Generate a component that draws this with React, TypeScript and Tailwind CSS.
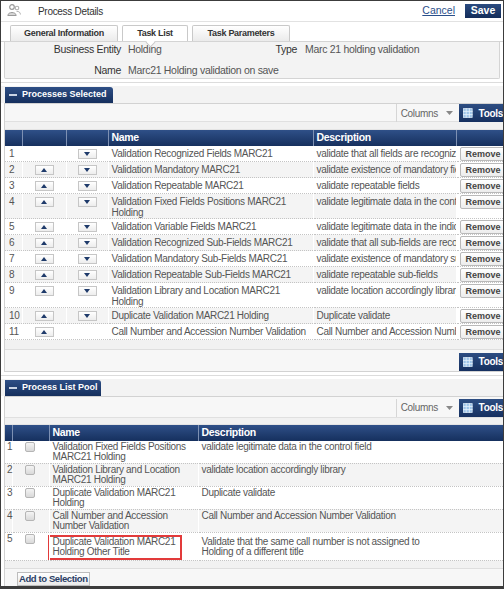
import React from "react";

const selected = [
  { name: "Validation Recognized Fields MARC21", desc: "validate that all fields are recognized" },
  { name: "Validation Mandatory MARC21", desc: "validate existence of mandatory fields" },
  { name: "Validation Repeatable MARC21", desc: "validate repeatable fields" },
  { name: "Validation Fixed Fields Positions MARC21 Holding", desc: "validate legitimate data in the control field" },
  { name: "Validation Variable Fields MARC21", desc: "validate legitimate data in the indicators" },
  { name: "Validation Recognized Sub-Fields MARC21", desc: "validate that all sub-fields are recognized" },
  { name: "Validation Mandatory Sub-Fields MARC21", desc: "validate existence of mandatory sub-fields" },
  { name: "Validation Repeatable Sub-Fields MARC21", desc: "validate repeatable sub-fields" },
  { name: "Validation Library and Location MARC21 Holding", desc: "validate location accordingly library" },
  { name: "Duplicate Validation MARC21 Holding", desc: "Duplicate validate" },
  { name: "Call Number and Accession Number Validation", desc: "Call Number and Accession Number Validation" },
];

const pool = [
  { name: "Validation Fixed Fields Positions MARC21 Holding", desc: "validate legitimate data in the control field" },
  { name: "Validation Library and Location MARC21 Holding", desc: "validate location accordingly library" },
  { name: "Duplicate Validation MARC21 Holding", desc: "Duplicate validate" },
  { name: "Call Number and Accession Number Validation", desc: "Call Number and Accession Number Validation" },
  {
    name: "Duplicate Validation MARC21 Holding Other Title",
    desc: "Validate that the same call number is not assigned to Holding of a different title",
  },
];

function ArrowBtn({ dir }: { dir: "up" | "down" }) {
  return (
    <div className="mx-auto flex h-[10px] w-[19px] items-center justify-center border border-[#c6c6c6] bg-linear-to-b from-white to-[#ededed]">
      <svg width="6" height="4" viewBox="0 0 6 4">
        {dir === "up" ? (
          <path d="M0 4 L3 0 L6 4 Z" fill="#1e3a6a" />
        ) : (
          <path d="M0 0 L6 0 L3 4 Z" fill="#1e3a6a" />
        )}
      </svg>
    </div>
  );
}

function ToolsButton() {
  return (
    <div className="flex h-[18px] w-[44px] shrink-0 items-center gap-[6px] bg-linear-to-b from-[#2d4d82] to-[#163060] pl-[4px] text-[10px] font-bold text-white">
      <svg width="12" height="12" viewBox="0 0 12 12">
        <rect x="0.5" y="0.5" width="11" height="11" fill="#9cc3e8" stroke="#d8e8f7" />
        <path d="M0 4 H12 M0 8 H12 M4 0 V12 M8 0 V12" stroke="#e8f2fb" strokeWidth="1" />
      </svg>
      Tools
    </div>
  );
}

function ColumnsMenu() {
  return (
    <div className="flex h-[18px] items-center gap-[8px] border-l border-[#d6d6d6] pl-[4px] pr-[6px] text-[10px] text-[#666]">
      Columns
      <svg width="7" height="4" viewBox="0 0 7 4">
        <path d="M0 0 H7 L3.5 4 Z" fill="#888" />
      </svg>
    </div>
  );
}

function SectionTab({ label, width }: { label: string; width: string }) {
  return (
    <div className="flex h-[17px] items-end bg-[#f3f3f3]">
      <div
        className={`ml-[4px] flex h-[16px] ${width} items-center gap-[5px] whitespace-nowrap rounded-tr-[3px] bg-linear-to-b from-[#2e4f86] to-[#152f5d] pl-[4px] text-[9px] font-bold tracking-[0px] text-white`}
      >
        <span className="h-[2px] w-[8px] bg-[#c9d3e3]" />
        {label}
      </div>
    </div>
  );
}

function Checkbox() {
  return (
    <span className="block h-[10px] w-[10px] rounded-[2px] border border-[#b5b5b5] bg-linear-to-b from-[#f4f4f4] to-[#d9d9d9]" />
  );
}

const tabCls =
  "flex h-[16px] items-center justify-center whitespace-nowrap rounded-t-[2px] border border-b-0 border-[#c9c9c9] text-[9px] font-bold tracking-[-0.3px] text-[#333]";

export default function App() {
  return (
    <div
      className="h-[589px] w-[504px] overflow-hidden border border-b-[3px] border-[#3c3c3c] bg-white text-[10px] tracking-[-0.3px] text-[#555]"
      style={{ fontFamily: '"Liberation Sans", Arial, sans-serif' }}
    >
      {/* page header */}
      <div className="flex h-[21px] items-center border-b border-[#e2e2e2] pl-[6px] pr-[2px]">
        <svg width="14" height="13" viewBox="0 0 14 13" className="mt-[-2px]">
          <circle cx="5" cy="3" r="2.3" fill="none" stroke="#9a9a9a" strokeWidth="1.2" />
          <circle cx="10" cy="4" r="1.8" fill="none" stroke="#b0b0b0" strokeWidth="1.1" />
          <path d="M0.8 11.5 C1 7.5 9 7.5 9.2 11.5 Z" fill="#d6d6d6" stroke="#9a9a9a" strokeWidth="1" />
          <path d="M9.5 7.3 C12 7.2 13.4 8.5 13.4 10.5" fill="none" stroke="#b0b0b0" strokeWidth="1" />
        </svg>
        <span className="ml-[17px] text-[10px] text-[#333]">Process Details</span>
        <span className="ml-auto text-[10.5px] tracking-normal text-[#2a4f8a] underline">Cancel</span>
        <span className="ml-[10px] flex h-[14px] w-[36px] items-center justify-center bg-linear-to-b from-[#2b4b80] to-[#142d5a] text-[10.5px] font-bold tracking-normal text-white">
          Save
        </span>
      </div>

      {/* tabs */}
      <div className="mt-[3px] flex h-[17px] items-end gap-[4px] border-b border-[#d4d4d4] pl-[9px]">
        <div className={`${tabCls} w-[108px] bg-linear-to-b from-white to-[#ebebeb]`}>General Information</div>
        <div className={`${tabCls} relative w-[66px] bg-white`}>
          Task List
          <span className="absolute bottom-[-5px] left-[24px] h-[7px] w-[7px] rotate-45 border-b border-r border-[#c9c9c9] bg-white" />
        </div>
        <div className={`${tabCls} w-[98px] bg-linear-to-b from-white to-[#ebebeb]`}>Task Parameters</div>
      </div>

      {/* info panel */}
      <div className="mx-[3px] flex h-[37px] flex-col justify-center gap-[5px] rounded-b-[2px] border border-t-0 border-[#d4d4d4] bg-[#f3f3f3] pt-[1px] text-[10.5px]">
        <div className="flex items-center">
          <span className="w-[116px] text-right text-[#333]">Business Entity</span>
          <span className="ml-[7px] w-[130px]">Holding</span>
          <span className="w-[39px] text-right text-[#333]">Type</span>
          <span className="ml-[8px]">Marc 21 holding validation</span>
        </div>
        <div className="flex items-center">
          <span className="w-[116px] text-right text-[#333]">Name</span>
          <span className="ml-[7px]">Marc21 Holding validation on save</span>
        </div>
      </div>

      {/* processes selected */}
      <div className="mt-[3px] border-t border-[#dcdcdc] pt-[3px]">
        <SectionTab label="Processes Selected" width="w-[108px]" />
        <div className="ml-[3px] border-l border-t border-[#d2d2d2] bg-[#f7f7f7]">
          <div className="flex h-[18px] items-center justify-end border-b border-[#e0e0e0] pt-px">
            <ColumnsMenu />
            <ToolsButton />
          </div>
          <div className="h-[8px] border-b border-[#e4e4e4] bg-[#f1f1f1]" />
          <table className="w-[500px] table-fixed border-collapse">
            <colgroup>
              <col className="w-[17px]" />
              <col className="w-[44px]" />
              <col className="w-[42px]" />
              <col className="w-[205px]" />
              <col className="w-[143px]" />
              <col className="w-[49px]" />
            </colgroup>
            <thead>
              <tr className="h-[16px] bg-linear-to-b from-[#2f5088] to-[#16305e] text-left text-[10.5px] font-bold text-white">
                <th className="border-r border-[#7d90b3]" />
                <th className="border-r border-[#7d90b3]" />
                <th className="border-r border-[#7d90b3]" />
                <th className="border-r border-[#7d90b3] pl-[3px]">Name</th>
                <th className="border-r border-[#7d90b3] pl-[3px]">Description</th>
                <th />
              </tr>
            </thead>
            <tbody>
              {selected.map((r, i) => (
                <tr
                  key={i}
                  className={`border-b border-dotted border-[#c4c4c4] align-top leading-[11px] ${
                    i % 2 === 1 ? "bg-[#f4f4f4]" : "bg-white"
                  }`}
                >
                  <td className="border-r border-white pl-[4px] pt-[2px]">{i + 1}</td>
                  <td className="border-r border-white pt-[3px]">{i > 0 && <ArrowBtn dir="up" />}</td>
                  <td className="border-r border-white pt-[3px]">
                    {i < selected.length - 1 && <ArrowBtn dir="down" />}
                  </td>
                  <td className="border-r border-white px-[3px] pt-[2px]">{r.name}</td>
                  <td className="overflow-hidden whitespace-nowrap border-r border-white pl-[3px] pt-[2px]">
                    {r.desc}
                  </td>
                  <td className="bg-white pl-[3px] pt-px">
                    <div className="flex h-[14px] w-[47px] items-center justify-center rounded-[2px] border border-[#b9b9b9] bg-linear-to-b from-white to-[#ececec] text-[9px] font-bold tracking-[0px] text-[#444]">
                      Remove
                    </div>
                  </td>
                </tr>
              ))}
            </tbody>
          </table>
          <div className="h-[10px] border-b border-[#dedede] bg-[#f1f1f1]" />
          <div className="flex h-[22px] items-center justify-end border-b border-[#d2d2d2] bg-[#f7f7f7] pt-[2px]">
            <ToolsButton />
          </div>
        </div>
      </div>

      {/* process list pool */}
      <div className="mt-[3px] border-t border-[#dcdcdc] pt-[3px]">
        <SectionTab label="Process List Pool" width="w-[96px]" />
        <div className="ml-[3px] border-l border-t border-[#d2d2d2] bg-[#f7f7f7]">
          <div className="flex h-[21px] items-center justify-end border-b border-[#e0e0e0] pt-px">
            <ColumnsMenu />
            <ToolsButton />
          </div>
          <div className="h-[7px] border-b border-[#e4e4e4] bg-[#f1f1f1]" />
          <table className="w-[500px] table-fixed border-collapse">
            <colgroup>
              <col className="w-[7px]" />
              <col className="w-[37px]" />
              <col className="w-[149px]" />
              <col className="w-[307px]" />
            </colgroup>
            <thead>
              <tr className="h-[15px] bg-linear-to-b from-[#2f5088] to-[#16305e] text-left text-[10.5px] font-bold text-white">
                <th className="border-r border-[#7d90b3]" />
                <th className="border-r border-[#7d90b3]" />
                <th className="border-r border-[#7d90b3] pl-[3px]">Name</th>
                <th className="pl-[3px]">Description</th>
              </tr>
            </thead>
            <tbody>
              {pool.map((r, i) => {
                const last = i === pool.length - 1;
                return (
                  <tr
                    key={i}
                    className={`border-b border-dotted border-[#c4c4c4] align-top leading-[10.5px] ${
                      i % 2 === 1 ? "bg-[#f4f4f4]" : "bg-white"
                    }`}
                  >
                    <td className="border-r border-white pl-[2px] pt-[1px]">{i + 1}</td>
                    <td className="border-r border-white pl-[12px] pt-[1px]">
                      <Checkbox />
                    </td>
                    <td className="border-r border-white pl-[3px] pr-[6px] pt-[1px]">
                      {last ? (
                        <div className="ml-[-5px] mt-[1px] w-[134px] border-2 border-[#e23a3a] px-[3px]">
                          {r.name}
                        </div>
                      ) : (
                        r.name
                      )}
                    </td>
                    <td className={`pl-[3px] pr-[66px] ${last ? "pt-[4px]" : "pt-[1px]"}`}>{r.desc}</td>
                  </tr>
                );
              })}
            </tbody>
          </table>
          <div className="h-[8px] border-b border-[#dedede] bg-[#f1f1f1]" />
          <div className="flex h-[20px] items-center bg-[#f7f7f7] pl-[12px]">
            <span className="border border-[#bdbdbd] bg-linear-to-b from-white to-[#e9e9e9] px-[1px] text-[9.5px] font-bold leading-[12px] tracking-[-0.4px] text-[#2a3e66]">
              Add to Selection
            </span>
          </div>
        </div>
      </div>
    </div>
  );
}
